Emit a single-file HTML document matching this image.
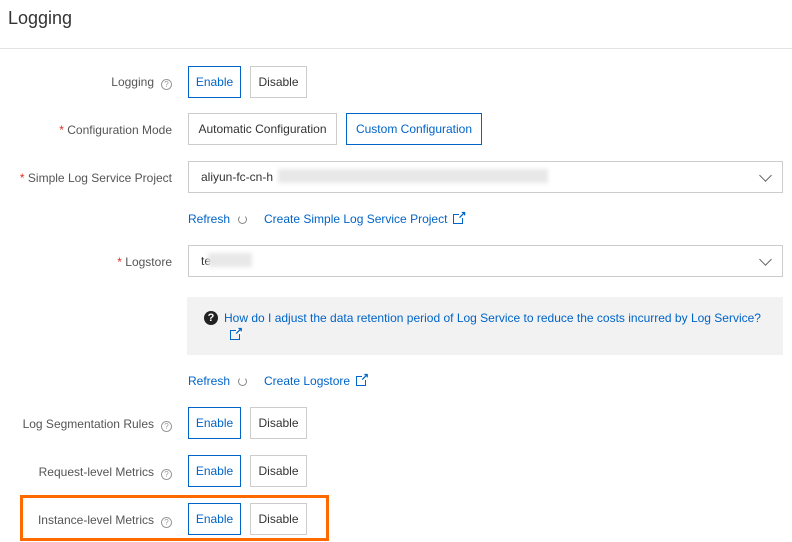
<!DOCTYPE html>
<html><head><meta charset="utf-8"><style>
*{box-sizing:border-box;margin:0;padding:0}
body{width:792px;height:542px;background:#fff;font-family:"Liberation Sans",sans-serif;font-size:12px;color:#333;position:relative;overflow:hidden}
.a{position:absolute}
.lbl{position:absolute;right:620px;text-align:right;color:#555;white-space:nowrap;line-height:14px}
.star{color:#d93026}
.qi{display:inline-block;width:11px;height:11px;border:1px solid #999;border-radius:50%;font-size:8px;line-height:9px;text-align:center;color:#999;margin-left:7px;vertical-align:-2px;position:relative;top:-1px}
.btn{position:absolute;height:32px;border:1px solid #ccc;line-height:30px;text-align:center;color:#333;background:#fff}
.btn.on{border-color:#0064c8;color:#0064c8}
.sel{position:absolute;left:188px;width:595px;height:32px;border:1px solid #ccc;line-height:30px;padding-left:12px;color:#333}
.chev{position:absolute;right:12px;top:9px;width:9px;height:9px;border-right:1.3px solid #666;border-bottom:1.3px solid #666;transform:rotate(45deg)}
.blur{position:absolute;background:#e8e8e8;filter:blur(2px)}
.link{position:absolute;color:#0064c8;white-space:nowrap;line-height:14px}
.ext{display:inline-block;width:10px;height:10px;border:1.5px solid #0064c8;margin-left:6px;vertical-align:-1px;position:relative}
.ext:after{content:"";position:absolute;right:-3px;top:-3px;width:6px;height:6px;background:#fff}
.ext:before{content:"↗";position:absolute;right:-4px;top:-6px;font-size:10px;font-weight:bold;color:#0064c8;z-index:1}
.ref{display:inline-block;width:9px;height:9px;border:1.3px solid #888;border-top-color:transparent;border-radius:50%;margin-left:8px;vertical-align:-1px}
</style></head><body>
<div class="a" style="left:8px;top:8px;font-size:18px;color:#333">Logging</div>
<div class="a" style="left:0;top:48px;width:792px;height:1px;background:#e3e3e3"></div>

<div class="lbl" style="top:75px">Logging<span class="qi">?</span></div>
<div class="btn on" style="left:188px;top:66px;width:53px">Enable</div>
<div class="btn" style="left:250px;top:66px;width:57px">Disable</div>

<div class="lbl" style="top:123px"><span class="star">*</span> Configuration Mode</div>
<div class="btn" style="left:188px;top:113px;width:149px">Automatic Configuration</div>
<div class="btn on" style="left:346px;top:113px;width:136px">Custom Configuration</div>

<div class="lbl" style="top:171px"><span class="star">*</span> Simple Log Service Project</div>
<div class="sel" style="top:161px">aliyun-fc-cn-h<div class="chev"></div></div>
<div class="blur" style="left:278px;top:169px;width:270px;height:14px"></div>

<div class="link" style="left:188px;top:212px">Refresh<span class="ref"></span></div>
<div class="link" style="left:264px;top:212px">Create Simple Log Service Project<span class="ext"></span></div>

<div class="lbl" style="top:255px"><span class="star">*</span> Logstore</div>
<div class="sel" style="top:245px">te<div class="chev"></div></div>
<div class="blur" style="left:208px;top:253px;width:44px;height:14px"></div>

<div class="a" style="left:187px;top:297px;width:596px;height:58px;background:#f2f2f2"></div>
<div class="a" style="left:204px;top:311px;width:14px;height:14px;border-radius:50%;background:#222;color:#fff;font-size:11px;font-weight:bold;line-height:14px;text-align:center">?</div>
<div class="link" style="left:224px;top:311px">How do I adjust the data retention period of Log Service to reduce the costs incurred by Log Service?</div>
<div class="link" style="left:224px;top:328px"><span class="ext" style="margin-left:6px"></span></div>

<div class="link" style="left:188px;top:374px">Refresh<span class="ref"></span></div>
<div class="link" style="left:264px;top:374px">Create Logstore<span class="ext"></span></div>

<div class="lbl" style="top:417px">Log Segmentation Rules<span class="qi">?</span></div>
<div class="btn on" style="left:188px;top:407px;width:53px">Enable</div>
<div class="btn" style="left:250px;top:407px;width:57px">Disable</div>

<div class="lbl" style="top:465px">Request-level Metrics<span class="qi">?</span></div>
<div class="btn on" style="left:188px;top:455px;width:53px">Enable</div>
<div class="btn" style="left:250px;top:455px;width:57px">Disable</div>

<div class="lbl" style="top:513px">Instance-level Metrics<span class="qi">?</span></div>
<div class="btn on" style="left:188px;top:503px;width:53px">Enable</div>
<div class="btn" style="left:250px;top:503px;width:57px">Disable</div>
<div class="a" style="left:20px;top:495px;width:309px;height:46px;border:3px solid #ff6a00"></div>
</body></html>
